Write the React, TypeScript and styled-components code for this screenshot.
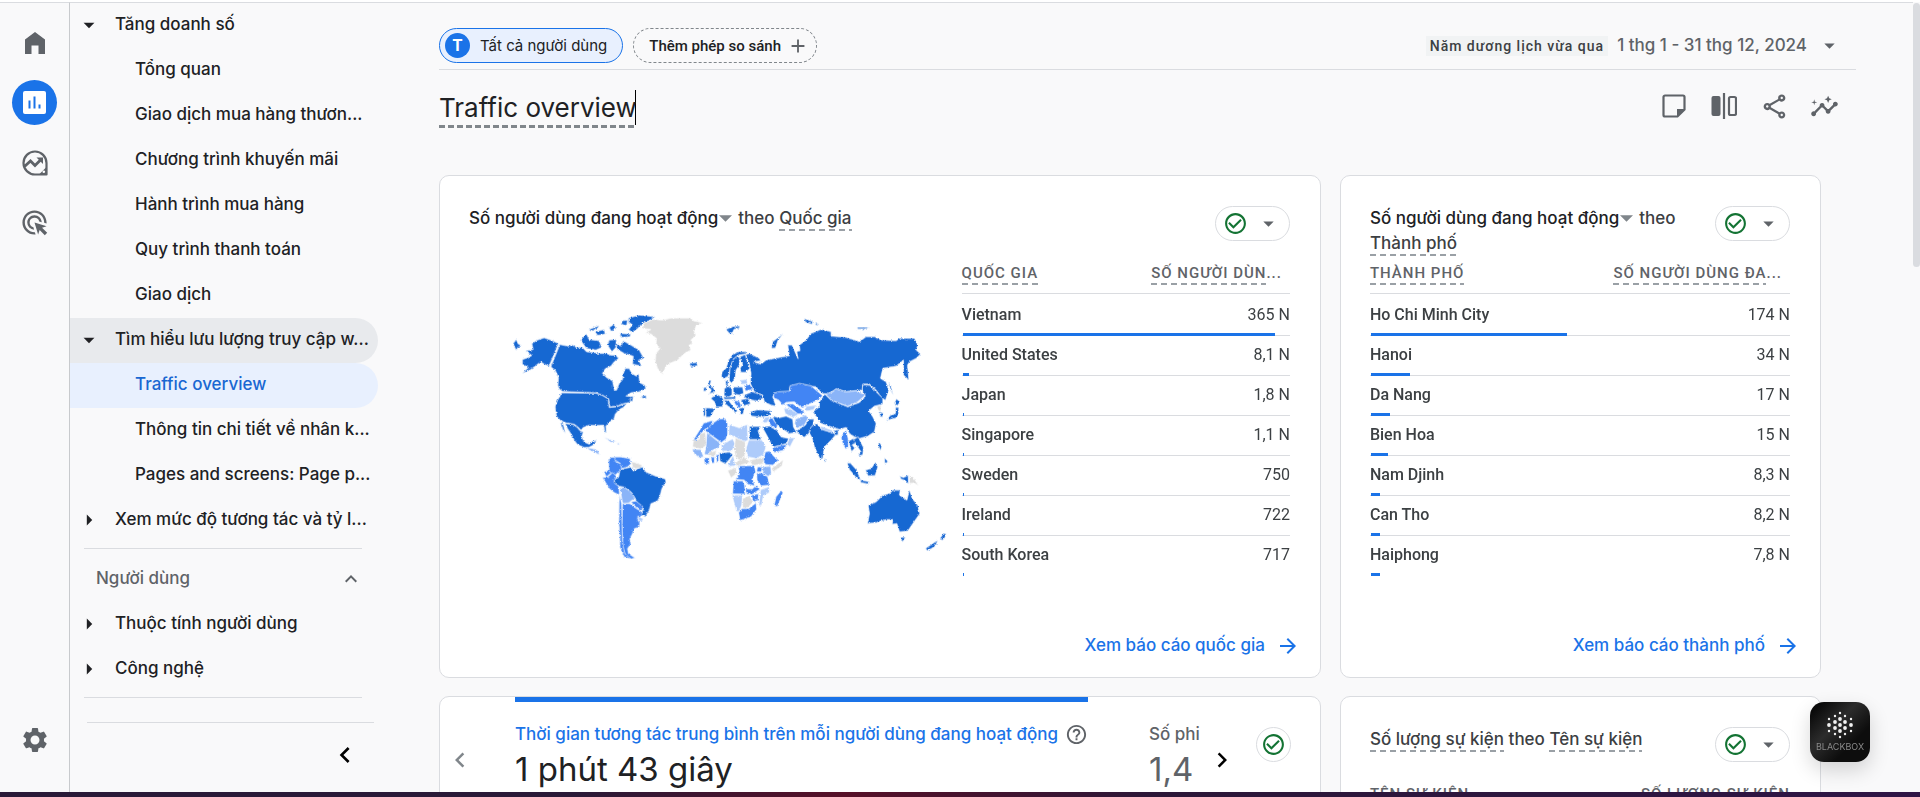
import React from "react";
import styled, { createGlobalStyle, css } from "styled-components";
import {
  MdAdd,
  MdAdsClick,
  MdArrowDropDown,
  MdArrowForward,
  MdArrowRight,
  MdCheckCircleOutline,
  MdChevronLeft,
  MdChevronRight,
  MdExpandLess,
  MdHelpOutline,
  MdInsights,
  MdOutlineShare,
  MdSettings,
} from "react-icons/md";

const color = {
  page: "#f9f9fa",
  line: "#dadce0",
  ink: "#202124",
  text: "#3c4043",
  muted: "#5f6368",
  blue: "#1a73e8",
  green: "#137333",
};

const Global = createGlobalStyle`
  *, *::before, *::after { box-sizing: border-box; }
  body { margin: 0; background: ${color.page}; color: ${color.ink}; font: 500 17px/25px Inter, "Noto Sans", sans-serif; }
  button, input { font: inherit; color: inherit; }
  button { border: 0; background: none; padding: 0; cursor: pointer; }
  a { text-decoration: none; color: inherit; }
  ul { list-style: none; margin: 0; padding: 0; }
  h1, h2, p { margin: 0; font: inherit; }
  svg { display: block; flex: none; }
`;

const dashes = css`
  background: repeating-linear-gradient(90deg, #9aa0a6 0 6px, transparent 6px 10px) left bottom / 100% 2px no-repeat;
`;

/* ---------- frame ---------- */

const Shell = styled.div`
  height: 100vh;
  display: grid;
  grid-template-columns: 70px 308px minmax(0, 1fr) 7px;
  grid-template-rows: minmax(0, 1fr) 5px;
  border-top: 2px solid #fff;
  overflow: hidden;
`;

const Rail = styled.nav`
  display: flex;
  flex-direction: column;
  align-items: center;
  gap: 15px;
  padding: 17px 0 30px;
  border-right: 1px solid #c8cacd;
  border-top: 1px solid ${color.line};
  color: ${color.muted};
`;

const RailButton = styled.button<{ $active?: boolean; $last?: boolean }>`
  width: 45px;
  height: 45px;
  border-radius: 50%;
  display: grid;
  place-items: center;
  background: ${(p) => (p.$active ? color.blue : "transparent")};
  color: ${(p) => (p.$active ? "#fff" : color.muted)};
  margin-top: ${(p) => (p.$last ? "auto" : "0")};
`;

const Side = styled.nav`
  border-top: 1px solid ${color.line};
  display: flex;
  flex-direction: column;
  overflow: hidden;
`;

const NavLink = styled.a<{ $child?: boolean; $tone?: "open" | "selected" }>`
  display: flex;
  align-items: center;
  height: 45px;
  padding: 0 6px 2px ${(p) => (p.$child ? "65px" : "0")};
  white-space: nowrap;
  border-radius: 0 23px 23px 0;
  background: ${(p) => (p.$tone === "open" ? "#e8eaed" : p.$tone === "selected" ? "#e8f0fe" : "none")};
  color: ${(p) => (p.$tone === "selected" ? "#1967d2" : color.ink)};
`;

const Caret = styled.span`
  width: 45px;
  padding-left: 6px;
`;

const Rule = styled.hr<{ $wide?: boolean }>`
  width: ${(p) => (p.$wide ? "287px" : "278px")};
  margin: ${(p) => (p.$wide ? "24px 0 0 17px" : "5px 0 0 14px")};
  border: 0;
  border-top: 1px solid ${color.line};
`;

const Section = styled.button`
  display: flex;
  align-items: center;
  justify-content: space-between;
  height: 45px;
  margin-top: 8px;
  padding: 0 15px 2px 26px;
  color: ${color.muted};
`;

const Collapse = styled.button`
  align-self: flex-end;
  margin: 16px 17px 0 0;
  color: #000;
`;

const Main = styled.main`
  border-top: 1px solid ${color.line};
  padding: 25px 57px 0 61px;
  overflow: hidden;
`;

const Scrollbar = styled.div`
  height: 264px;
  margin-top: 1px;
  border-radius: 4px;
  background: ${color.line};
`;

const Dock = styled.div`
  grid-column: 1 / -1;
  background: linear-gradient(90deg, #2a1a38 0 30%, #571028 44%, #2c1738 60%, #2f1546 100%);
`;

/* ---------- header ---------- */

const TopBar = styled.header`
  display: flex;
  align-items: center;
  gap: 10px;
  padding-bottom: 6px;
  border-bottom: 1px solid ${color.line};
`;

const Chip = styled.button<{ $solid?: boolean }>`
  height: 35px;
  min-width: 184px;
  display: flex;
  align-items: center;
  gap: ${(p) => (p.$solid ? "8px" : "6px")};
  padding: 0 ${(p) => (p.$solid ? "15px 0 5px" : "7px 0 15px")};
  border-radius: 18px;
  border: 1px ${(p) => (p.$solid ? `solid ${color.blue}` : "dashed #80868b")};
  background: ${(p) => (p.$solid ? "#e8f0fe" : "transparent")};
  font: ${(p) => (p.$solid ? "400 15px/20px Inter, sans-serif" : "500 15px/20px Roboto, sans-serif")};
  white-space: nowrap;
`;

const Avatar = styled.span`
  width: 25px;
  height: 25px;
  margin-right: 2px;
  border-radius: 50%;
  background: ${color.blue};
  color: #fff;
  font: 700 16px/25px Roboto, sans-serif;
`;

const DateButton = styled.button`
  display: flex;
  align-items: center;
  margin-left: auto;
  padding-right: 14px;
  color: ${color.muted};
  white-space: nowrap;
  svg { margin-left: 10px; }
`;

const Preset = styled.span`
  padding: 0 4px;
  margin-right: 9px;
  background: #f1f3f4;
  color: ${color.text};
  font: 500 14px/20px Roboto, sans-serif;
  letter-spacing: 1px;
`;

const TitleRow = styled.div`
  display: flex;
  justify-content: space-between;
  align-items: flex-start;
  padding: 20px 7px 47px 0;
`;

const TitleInput = styled.input`
  width: 197px;
  height: 38px;
  padding: 0 0 3px;
  border: 0;
  outline: 0;
  font: 400 26px/32px Inter, sans-serif;
  background:
    linear-gradient(#000, #000) right top / 1px 35px no-repeat,
    repeating-linear-gradient(90deg, #80868b 0 6px, transparent 6px 9px) left bottom / 100% 3px no-repeat;
`;

const Tools = styled.div`
  display: flex;
  color: ${color.muted};
`;

const Tool = styled.button`
  width: 50px;
  height: 32px;
  display: grid;
  place-items: center;
`;

/* ---------- cards ---------- */

const Cards = styled.div`
  display: grid;
  grid-template-columns: 11fr 6fr;
  gap: 18px 19px;
  margin-right: 35px;
`;

const Card = styled.section<{ $flush?: boolean }>`
  display: flex;
  flex-direction: column;
  min-width: 0;
  min-height: 503px;
  padding: ${(p) => (p.$flush ? "0 29px 0 0" : "30px 30px 19px 29px")};
  background: #fff;
  border: 1px solid ${color.line};
  border-radius: 10px;
`;

const CardHead = styled.header`
  display: flex;
  align-items: flex-start;
  justify-content: space-between;
  min-height: 50px;
`;

const CardTitle = styled.h2`
  max-width: 400px;
`;

const Metric = styled.button`
  display: inline-flex;
  align-items: center;
  gap: 1px;
  margin-right: 6px;
`;

const Dashed = styled.span`
  display: inline-block;
  color: ${color.text};
  ${dashes}
`;

const Muted = styled.span`
  color: ${color.text};
`;

const Status = styled.button<{ $round?: boolean }>`
  flex: none;
  width: ${(p) => (p.$round ? "35px" : "75px")};
  height: 35px;
  display: flex;
  align-items: center;
  justify-content: center;
  gap: 8px;
  border: 1px solid ${color.line};
  border-radius: 18px;
  background: #fff;
  color: ${color.muted};
  svg:first-child { color: ${color.green}; }
`;

const Split = styled.div`
  display: grid;
  grid-template-columns: 3fr 2fr;
  align-items: start;
`;

const MapArt = styled.svg`
  width: 100%;
  margin-top: 34px;
`;

const Table = styled.table`
  width: 100%;
  border-spacing: 0;
  font: 400 16px/20px Roboto, sans-serif;
  color: ${color.text};
`;

const HeadCell = styled.th<{ $side?: "end" | "cut" }>`
  height: 38px;
  padding: 7px ${(p) => (p.$side === "cut" ? "8px" : "0")} 0 0;
  vertical-align: top;
  text-align: ${(p) => (p.$side ? "right" : "left")};
  font: 500 15px/20px Roboto, sans-serif;
  letter-spacing: 1px;
  color: ${color.muted};
  border-bottom: 1px solid ${color.line};
  white-space: nowrap;
`;

const HeadText = styled.span`
  display: inline-block;
  padding-bottom: 2px;
  ${dashes}
`;

const Row = styled.tr`
  position: relative;
  td { border-bottom: 1px solid ${color.line}; height: 40px; padding: 9px 0 0; vertical-align: top; }
  &:first-child td { height: 42px; padding-top: 11px; }
  &:last-child td { border-bottom-color: transparent; }
`;

const Name = styled.td`
  font-weight: 500;
`;

const Value = styled.td`
  text-align: right;
`;

const Bar = styled.span`
  position: absolute;
  left: 1px;
  bottom: 0;
  height: 3px;
  min-width: 1px;
  background: ${color.blue};
`;

const ReportLink = styled.a`
  display: flex;
  align-items: center;
  align-self: flex-end;
  gap: 11px;
  margin: auto -10px 0 0;
  color: ${color.blue};
`;

const Carousel = styled.div`
  display: flex;
  align-items: flex-start;
`;

const Step = styled.button<{ $on?: boolean }>`
  width: 40px;
  margin-top: 48px;
  display: grid;
  place-items: center;
  color: ${(p) => (p.$on ? "#000" : "#80868b")};
`;

const Tabs = styled.div`
  flex: 1;
  min-width: 0;
  display: flex;
  gap: 61px;
  padding-left: 35px;
  overflow: hidden;
`;

const Tab = styled.button<{ $active?: boolean }>`
  flex: none;
  padding-top: 20px;
  text-align: left;
  white-space: nowrap;
  border-top: 5px solid ${(p) => (p.$active ? color.blue : "transparent")};
  color: ${(p) => (p.$active ? color.blue : color.muted)};
`;

const TabLabel = styled.span`
  display: flex;
  align-items: center;
  gap: 7px;
  svg { color: ${color.muted}; }
`;

const TabValue = styled.span<{ $active?: boolean }>`
  display: block;
  margin-top: 2px;
  font: 400 33px/40px Inter, sans-serif;
  color: ${(p) => (p.$active ? color.ink : color.muted)};
`;

const StatusSlot = styled.div`
  margin: 30px 0 0 14px;
`;

const Assistant = styled.button`
  position: fixed;
  right: 50px;
  bottom: 35px;
  width: 60px;
  height: 60px;
  display: flex;
  flex-direction: column;
  align-items: center;
  gap: 1px;
  padding-top: 8px;
  border-radius: 14px;
  background: linear-gradient(135deg, #0a0a0a 10%, #2c2c2c 40%, #0d0d0d 70%);
  box-shadow: 0 8px 20px rgba(0, 0, 0, 0.16);
  color: #8a8a8a;
  font: 400 9px/12px Inter, sans-serif;
`;

/* ---------- icons ---------- */

const HomeIcon = () => (
  <svg width="20" height="22" viewBox="0 0 20 22" fill="currentColor">
    <path d="M0 7.500 10 0l10 7.500V22h-6.500v-8.500h-7V22H0z" />
  </svg>
);

const ReportsIcon = () => (
  <svg width="23" height="23" viewBox="0 0 23 23">
    <rect width="23" height="23" rx="2" fill="#fff" />
    <path d="M6.500 17.500V9.500M11.500 17.500V5.500M16.500 17.500v-4" stroke={color.blue} strokeWidth="2" />
  </svg>
);

const ExploreIcon = () => (
  <svg width="26" height="26" viewBox="0 0 26 26" fill="none" stroke="currentColor" strokeWidth="2.200">
    <path d="M13 24.500a11.500 11.500 0 1 1 11.500-11.500v11.500z" strokeLinejoin="round" />
    <path d="M2.500 16.500l6-5.500 4.500 4.500 6.500-6.500" strokeWidth="2.800" />
    <path d="M14.500 7.500H21V14z" fill="currentColor" stroke="none" />
    <path d="M16.500 25 25 16.500V25z" fill="currentColor" stroke="none" />
    <circle cx="21.800" cy="21.800" r="1.300" fill="#fff" stroke="none" />
  </svg>
);

const NoteIcon = () => (
  <svg width="24" height="24" viewBox="0 0 24 24" fill="none" stroke="currentColor" strokeWidth="2.200">
    <path d="M3 1.500h18a1.500 1.500 0 0 1 1.500 1.500v12.500l-7 7H3A1.500 1.500 0 0 1 1.500 21V3A1.500 1.500 0 0 1 3 1.500z" />
    <path d="M15 22.500V15h7.500z" fill="currentColor" stroke="none" />
  </svg>
);

const CompareIcon = () => (
  <svg width="26" height="26" viewBox="0 0 26 26" fill="none" stroke="currentColor">
    <rect x="0.500" y="3" width="9" height="20" rx="2" fill="currentColor" stroke="none" />
    <path d="M13 0v26" strokeWidth="2.200" />
    <rect x="18" y="4" width="7" height="18" rx="1.500" strokeWidth="2.200" />
  </svg>
);

const CheckIcon = () => <MdCheckCircleOutline size={25} />;

const dots: [number, number, number][] = [
  [15, 2, 1], [10, 5, 1], [20, 5, 1], [15, 8, 2], [4, 8, 1], [26, 8, 1], [10, 11, 2], [20, 11, 2], [4, 14, 2], [26, 14, 2],
  [15, 14, 2], [10, 17, 2], [20, 17, 2], [4, 20, 1], [26, 20, 1], [15, 20, 2], [10, 23, 1], [20, 23, 1], [15, 26, 1],
];

const DotsIcon = () => (
  <svg width="30" height="30" viewBox="0 0 30 28" fill="#f1f1f1">
    {dots.map(([x, y, r], i) => (
      <circle key={i} cx={x} cy={y} r={r === 2 ? 1.9 : 1.2} />
    ))}
  </svg>
);

/* ---------- world map ---------- */

const D = "#1967d2";
const M = "#4285f4";
const L = "#8ab4f8";
const P = "#aecbfa";
const G = "#dcdcdc";

type Land = [string, string];

const americas: Land[] = [
  [D, "182,163 205,168 220,165 232,172 250,172 262,185 285,187 300,190 322,190 335,195 350,195 358,205 345,215 335,228 318,236 310,250 322,262 340,272 346,300 352,300 360,280 370,268 372,250 378,235 390,235 398,250 412,258 418,250 422,278 437,285 440,296 420,305 395,308 380,318 395,318 400,330 388,338 375,340 350,348 332,350 328,325 310,315 290,308 190,304 180,296 176,285 178,262 168,240 155,230"],
  [D, "188,308 290,309 310,316 327,326 330,352 352,350 385,338 372,352 360,358 348,372 345,385 330,397 320,408 322,428 317,425 313,405 290,406 270,405 252,412 245,420 238,412 225,402 200,398 185,392 172,378 168,350 175,330"],
  [D, "178,160 150,228 135,222 125,215 108,228 92,240 70,250 88,232 70,222 70,208 88,202 98,196 80,183 102,178 98,160 115,150 135,143 155,150"],
  [D, "42,160 52,148 56,160 68,168 56,172 52,182 46,170"],
  [D, "198,400 222,403 235,412 243,422 252,425 248,440 255,455 270,462 280,453 292,450 283,464 268,472 255,472 235,463 225,450 218,435 205,415"],
  [D, "184,398 191,398 199,429 192,420"],
  [L, "262,472 285,476 298,482 300,494 290,488 272,480"],
  [D, "388,84 420,75 468,80 450,92 430,100 415,115 400,128 388,118 400,105 388,95"],
  [D, "368,92 385,90 382,108 366,102"],
  [D, "350,162 366,168 372,152 395,165 420,180 434,205 418,210 428,228 400,222 402,198 375,190 355,178"],
  [D, "244,150 262,132 270,148 300,152 308,172 290,180 262,175"],
  [D, "270,118 300,106 296,114 275,124"],
  [D, "330,150 352,148 350,172 338,185 325,165"],
  [D, "288,125 315,118 318,132 295,136"],
  [D, "362,130 395,132 392,140 365,142"],
  [D, "330,112 345,102 350,115 336,124"],
  [D, "426,318 440,316 442,325 430,324"],
  [D, "392,320 402,318 400,334 394,334"],
  [L, "315,441 335,449 352,454 335,456"],
  [L, "354,458 364,460 356,464"],
  [G, "432,100 460,88 490,90 515,84 575,84 582,92 610,98 590,108 585,125 590,135 575,150 580,160 570,165 575,180 555,190 535,210 510,220 500,230 490,252 475,235 468,215 470,190 482,175 470,160 472,145 455,132 438,128 455,118 430,115"],
  [M, "335,502 348,500 350,515 365,520 368,535 355,548 345,557 330,545 328,510"],
  [M, "345,500 365,500 392,505 396,520 385,530 368,535 362,518 350,512"],
  [G, "396,514 412,518 428,524 426,534 402,536"],
  [M, "314,545 328,540 336,548 322,560"],
  [M, "310,562 326,560 340,547 352,558 345,575 358,587 362,615 345,607 330,595"],
  [D, "362,540 375,535 398,530 402,542 430,530 440,545 470,558 498,566 500,575 488,595 482,618 475,632 455,640 450,660 438,680 425,672 432,657 415,640 408,625 395,605 372,590 360,588 347,580 345,567 358,562"],
  [L, "362,592 378,592 398,608 408,625 395,632 390,638 370,640"],
  [M, "395,635 410,632 430,648 428,660 412,652"],
  [M, "370,640 392,640 410,654 425,662 430,675 415,685 422,700 420,710 405,715 400,730 392,745 395,760 385,775 388,790 408,803 395,806 380,800 370,770 370,740 368,700"],
  [M, "360,610 367,640 368,700 370,760 377,790 395,806 375,800 362,770 362,740 359,700"],
  [P, "416,677 432,685 428,694 416,690"],
];

/* Europe, Africa and western Asia, drawn from the north-west corner of Iceland */
const centre: Land[] = [
  [D, "0,55 22,52 25,62 5,65"],
  [D, "96,95 98,80 110,70 118,45 130,28 150,20 172,20 174,26 148,30 135,40 125,60 120,85 115,95 103,100"],
  [D, "120,98 122,70 130,45 142,34 152,38 150,60 140,75 138,95 128,114 120,108"],
  [D, "150,36 168,28 172,45 182,70 168,82 155,82 152,70 160,58"],
  [D, "58,106 66,106 62,120 72,128 78,140 60,146 66,135 58,125"],
  [D, "44,127 52,127 50,138 42,138"],
  [D, "105,130 120,123 128,130 128,150 118,156 104,152"],
  [D, "131,126 160,126 163,145 150,150 132,146"],
  [D, "108,108 116,106 116,120 110,122"],
  [D, "64,160 82,148 98,155 103,165 100,185 80,186 76,170"],
  [D, "50,188 77,190 70,205 62,216 50,216"],
  [D, "44,188 49,188 48,214 42,212"],
  [D, "105,166 118,166 130,182 145,198 138,202 125,190 108,176"],
  [D, "103,156 122,156 140,154 138,162 104,163"],
  [D, "162,150 190,140 212,148 222,158 205,168 188,165 170,160"],
  [M, "165,122 180,117 192,133 168,138"],
  [P, "152,106 172,102 175,116 158,118"],
  [D, "154,164 176,160 184,176 164,182"],
  [M, "132,166 150,168 156,182 150,190 138,178"],
  [D, "150,190 165,186 162,206 154,208"],
  [D, "182,200 205,194 245,197 244,210 215,216 186,213"],
  [P, "222,218 242,214 234,232 220,234"],
  [M, "236,226 247,216 264,240 262,250 245,242"],
  [D, "250,212 268,218 290,213 310,222 312,245 322,262 300,265 285,255 268,245 255,228"],
  [D, "218,245 240,243 262,255 275,275 298,280 292,295 255,305 245,295 232,270"],
  [M, "248,308 278,300 292,298 284,315 255,322"],
  [P, "300,278 316,278 302,305 292,298"],
  [M, "253,145 268,140 300,138 302,122 330,115 365,122 400,152 385,165 352,180 335,187 315,170 290,172 280,180 268,165 253,158"],
  [M, "288,178 310,176 335,192 348,204 325,207 305,190"],
  [P, "283,190 300,190 328,208 310,217 288,206"],
  [P, "345,184 382,180 372,194 350,198"],
  [L, "318,222 350,210 356,220 345,240 322,250 316,235"],
  [D, "322,256 348,240 358,222 374,222 370,245 358,265 345,276 325,264"],
  [D, "360,264 365,245 382,235 395,250 430,262 438,270 425,285 405,305 400,340 392,342 375,305 368,278"],
  [P, "394,243 430,256 430,264 394,252"],
  [D, "405,338 411,348 406,350"],
  [M, "43,234 70,226 68,240 45,254 18,287 12,285 36,247"],
  [M, "68,236 88,222 108,220 115,236 115,265 110,282 96,292 48,257"],
  [P, "120,238 150,248 174,238 176,285 165,290 135,275 118,268"],
  [D, "180,244 215,244 206,258 216,283 180,283"],
  [G, "12,287 30,282 30,268 48,260 52,300 35,312 10,305"],
  [L, "53,262 94,295 88,308 70,315 58,330 45,327 50,305"],
  [P, "95,300 130,281 137,295 128,318 98,318"],
  [G, "138,278 168,290 168,330 150,345 138,335 135,310"],
  [P, "178,285 218,285 230,305 222,330 200,340 175,335 170,310"],
  [D, "90,324 120,321 131,328 118,345 108,356 92,348"],
  [M, "44,338 60,338 60,356 46,356"],
  [M, "65,336 76,336 75,354 67,354"],
  [M, "80,332 88,326 88,350 82,350"],
  [G, "58,322 82,316 78,332 58,334"],
  [L, "8,312 35,313 43,335 30,338 15,325"],
  [P, "116,356 132,330 138,362 118,364"],
  [G, "138,352 165,336 184,352 160,358 142,364"],
  [G, "180,345 200,341 225,335 222,356 190,362"],
  [M, "222,345 228,320 240,318 255,335 268,345 250,360 228,358"],
  [G, "246,370 270,352 282,344 278,362 252,380"],
  [L, "220,365 244,363 246,385 236,394 220,382"],
  [M, "204,366 218,364 216,380 202,380"],
  [G, "115,376 140,366 142,385 125,398"],
  [M, "147,362 195,361 199,380 190,400 196,422 175,417 165,405 138,402 150,388"],
  [M, "202,384 218,384 235,395 240,420 215,422 203,405"],
  [M, "132,408 160,407 166,420 168,447 130,446"],
  [M, "168,430 188,432 202,420 212,432 190,447 172,447"],
  [P, "213,434 240,424 240,442 222,452 217,480 208,482 212,450"],
  [P, "128,450 160,450 157,480 150,499 141,498"],
  [G, "160,460 180,451 192,470 176,487 160,489"],
  [M, "186,450 208,446 206,466 192,470"],
  [M, "148,502 158,490 178,490 200,473 202,492 185,515 152,526"],
  [M, "275,436 281,442 264,484 254,482 260,455"],
];

/* Russia, eastern Asia and Oceania */
const east: Land[] = [
  [D, "138,195 150,190 180,205 184,212 162,215 185,222 200,210 225,205 250,200 270,197 265,165 278,165 296,206 292,185 302,182 300,165 320,150 335,130 365,118 395,125 395,138 440,142 480,155 500,140 525,140 545,150 590,152 600,145 645,145 655,165 650,180 663,192 650,205 630,215 624,225 628,270 612,255 612,210 590,228 550,235 543,265 560,275 568,300 558,330 548,325 530,300 510,282 490,282 488,300 465,302 440,305 410,297 385,312 368,310 350,290 330,288 302,283 272,290 270,306 228,308 220,320 230,348 215,345 195,335 190,315 165,305 153,280 155,250 150,220"],
  [D, "216,175 220,155 252,131 236,150 228,174"],
  [D, "80,118 100,110 122,108 120,114 104,118 98,132 90,130"],
  [D, "314,86 340,95 338,103 318,96"],
  [D, "346,98 358,103 350,106"],
  [D, "472,112 512,112 495,117 476,117"],
  [D, "340,365 360,350 360,335 376,312 395,330 420,340 445,350 480,337 497,320 488,300 490,284 510,285 530,305 550,325 550,342 525,348 508,362 520,380 530,400 525,425 505,438 480,445 465,440 450,430 440,412 420,418 400,412 365,400 355,385"],
  [L, "378,312 400,305 410,296 440,305 470,302 498,315 475,335 445,349 418,339 395,330"],
  [G, "532,348 545,346 544,364 536,360"],
  [D, "541,365 551,369 549,381 541,379"],
  [D, "585,338 591,326 602,336 590,350"],
  [D, "588,352 598,352 597,374 589,384 572,388 560,393 572,376 588,370"],
  [D, "566,274 575,290 581,314 574,302"],
  [M, "424,440 440,418 446,445 447,472 438,476 430,460"],
  [D, "404,422 416,418 416,434 406,436"],
  [D, "448,452 464,444 470,458 458,464 466,474 456,484 452,470"],
  [D, "462,448 476,440 492,472 490,494 476,498 484,484 472,466"],
  [D, "443,519 453,519 472,540 484,570 470,562 450,538"],
  [D, "482,569 510,575 508,582 484,577"],
  [D, "498,540 515,535 528,516 535,530 527,556 506,557"],
  [D, "539,454 547,468 543,482 537,466"],
  [D, "555,503 566,514 556,520"],
  [D, "600,558 612,562 626,555 627,582 618,572 604,566"],
  [G, "630,555 642,562 658,588 644,578 630,580"],
  [D, "506,645 530,635 550,615 570,610 580,600 602,600 600,615 622,630 630,598 638,625 655,645 661,670 640,700 625,722 600,725 592,700 578,702 580,688 560,688 530,697 504,700 510,670"],
  [D, "603,741 618,741 609,755"],
  [D, "721,744 726,738 731,729 740,731 736,742 728,750"],
  [D, "678,774 692,765 708,754 715,752 706,768 694,776 683,781"],
];

const regions: { x: number; y: number; lands: Land[] }[] = [
  { x: 0, y: 0, lands: americas },
  { x: 600, y: 0, lands: east },
  { x: 570, y: 165, lands: centre },
];

const WorldMap = () => (
  <MapArt viewBox="-90 0 1476 870" role="img" aria-label="Quốc gia">
    <filter id="coast" x="0" y="0" width="100%" height="100%">
      <feTurbulence type="fractalNoise" baseFrequency="0.2" numOctaves="2" seed="4" />
      <feDisplacementMap in="SourceGraphic" scale="8" xChannelSelector="R" yChannelSelector="G" />
    </filter>
    <g filter="url(#coast)" stroke="#fff" strokeWidth="2" strokeLinejoin="round">
      {regions.map((r) => (
        <g key={`${r.x}-${r.y}`} transform={`translate(${r.x} ${r.y})`}>
          {r.lands.map(([fill, points]) => (
            <polygon key={points} points={points} fill={fill} />
          ))}
        </g>
      ))}
    </g>
  </MapArt>
);

/* ---------- data ---------- */

type NavItem = { label: string; child?: boolean; open?: boolean; selected?: boolean; tinted?: boolean };

const navItems: NavItem[] = [
  { label: "Tăng doanh số", open: true },
  { label: "Tổng quan", child: true },
  { label: "Giao dịch mua hàng thươn...", child: true },
  { label: "Chương trình khuyến mãi", child: true },
  { label: "Hành trình mua hàng", child: true },
  { label: "Quy trình thanh toán", child: true },
  { label: "Giao dịch", child: true },
  { label: "Tìm hiểu lưu lượng truy cập w...", open: true, tinted: true },
  { label: "Traffic overview", child: true, selected: true },
  { label: "Thông tin chi tiết về nhân k...", child: true },
  { label: "Pages and screens: Page p...", child: true },
  { label: "Xem mức độ tương tác và tỷ l..." },
];

const userItems: NavItem[] = [{ label: "Thuộc tính người dùng" }, { label: "Công nghệ" }];

type Datum = [name: string, value: string, share: number];

const countries: Datum[] = [
  ["Vietnam", "365 N", 95],
  ["United States", "8,1 N", 2.1],
  ["Japan", "1,8 N", 0.5],
  ["Singapore", "1,1 N", 0.3],
  ["Sweden", "750", 0.2],
  ["Ireland", "722", 0.2],
  ["South Korea", "717", 0.2],
];

const cities: Datum[] = [
  ["Ho Chi Minh City", "174 N", 46.7],
  ["Hanoi", "34 N", 9.2],
  ["Da Nang", "17 N", 4.6],
  ["Bien Hoa", "15 N", 4.1],
  ["Nam Djinh", "8,3 N", 2.2],
  ["Can Tho", "8,2 N", 2.2],
  ["Haiphong", "7,8 N", 2.1],
];

/* ---------- parts ---------- */

const NavList = ({ items }: { items: NavItem[] }) => (
  <ul>
    {items.map((item) => (
      <li key={item.label}>
        <NavLink
          href="#"
          $child={item.child}
          $tone={item.selected ? "selected" : item.tinted ? "open" : undefined}
          aria-current={item.selected ? "page" : undefined}
        >
          {!item.child && <Caret>{item.open ? <MdArrowDropDown size={26} /> : <MdArrowRight size={26} />}</Caret>}
          {item.label}
        </NavLink>
      </li>
    ))}
  </ul>
);

const StatusMenu = () => (
  <Status aria-label="Chất lượng dữ liệu">
    <CheckIcon />
    <MdArrowDropDown size={25} />
  </Status>
);

const DataTable = ({ first, second, cut, rows }: { first: string; second: string; cut?: boolean; rows: Datum[] }) => (
  <Table>
    <thead>
      <tr>
        <HeadCell scope="col">
          <HeadText>{first}</HeadText>
        </HeadCell>
        <HeadCell scope="col" $side={cut ? "cut" : "end"}>
          <HeadText>{second}</HeadText>
          {cut && "..."}
        </HeadCell>
      </tr>
    </thead>
    <tbody>
      {rows.map(([name, value, share]) => (
        <Row key={name}>
          <Name>
            {name}
            <Bar style={{ width: `${share}%` }} />
          </Name>
          <Value>{value}</Value>
        </Row>
      ))}
    </tbody>
  </Table>
);

const MetricTitle = ({ by }: { by: string }) => (
  <CardTitle>
    <Metric>
      Số người dùng đang hoạt động
      <svg width="13" height="7" viewBox="0 0 12 6" fill="#80868b">
        <path d="M0 0h12L6 6z" />
      </svg>
    </Metric>
    <Muted>theo </Muted>
    <Dashed>{by}</Dashed>
  </CardTitle>
);

export default function App() {
  return (
    <>
      <Global />
      <Shell>
        <Rail aria-label="Chính">
          <RailButton aria-label="Trang chủ"><HomeIcon /></RailButton>
          <RailButton $active aria-label="Báo cáo"><ReportsIcon /></RailButton>
          <RailButton aria-label="Khám phá"><ExploreIcon /></RailButton>
          <RailButton aria-label="Quảng cáo"><MdAdsClick size={29} /></RailButton>
          <RailButton $last aria-label="Quản trị"><MdSettings size={30} /></RailButton>
        </Rail>

        <Side aria-label="Báo cáo">
          <NavList items={navItems} />
          <Rule />
          <Section aria-expanded="true">
            Người dùng
            <MdExpandLess size={24} />
          </Section>
          <NavList items={userItems} />
          <Rule />
          <Rule $wide />
          <Collapse aria-label="Thu gọn"><MdChevronLeft size={32} /></Collapse>
        </Side>

        <Main>
          <TopBar>
            <Chip $solid>
              <Avatar>T</Avatar>
              Tất cả người dùng
            </Chip>
            <Chip>
              Thêm phép so sánh
              <MdAdd size={22} color={color.muted} />
            </Chip>
            <DateButton>
              <Preset>Năm dương lịch vừa qua</Preset>
              1 thg 1 - 31 thg 12, 2024
              <MdArrowDropDown size={25} />
            </DateButton>
          </TopBar>

          <TitleRow>
            <h1>
              <TitleInput aria-label="Tên báo cáo" defaultValue="Traffic overview" />
            </h1>
            <Tools>
              <Tool aria-label="Ghi chú"><NoteIcon /></Tool>
              <Tool aria-label="So sánh"><CompareIcon /></Tool>
              <Tool aria-label="Chia sẻ"><MdOutlineShare size={29} /></Tool>
              <Tool aria-label="Thông tin chi tiết"><MdInsights size={29} /></Tool>
            </Tools>
          </TitleRow>

          <Cards>
            <Card>
              <CardHead>
                <MetricTitle by="Quốc gia" />
                <StatusMenu />
              </CardHead>
              <Split>
                <WorldMap />
                <DataTable first="QUỐC GIA" second="SỐ NGƯỜI DÙN" cut rows={countries} />
              </Split>
              <ReportLink href="#">
                Xem báo cáo quốc gia
                <MdArrowForward size={24} />
              </ReportLink>
            </Card>

            <Card>
              <CardHead>
                <MetricTitle by="Thành phố" />
                <StatusMenu />
              </CardHead>
              <DataTable first="THÀNH PHỐ" second="SỐ NGƯỜI DÙNG ĐA" cut rows={cities} />
              <ReportLink href="#">
                Xem báo cáo thành phố
                <MdArrowForward size={24} />
              </ReportLink>
            </Card>

            <Card $flush>
              <Carousel>
                <Step aria-label="Trước"><MdChevronLeft size={30} /></Step>
                <Tabs role="tablist">
                  <Tab role="tab" aria-selected="true" $active>
                    <TabLabel>
                      Thời gian tương tác trung bình trên mỗi người dùng đang hoạt động
                      <MdHelpOutline size={23} />
                    </TabLabel>
                    <TabValue $active>1 phút 43 giây</TabValue>
                  </Tab>
                  <Tab role="tab" aria-selected="false">
                    <TabLabel>Số phi</TabLabel>
                    <TabValue>1,4</TabValue>
                  </Tab>
                </Tabs>
                <Step $on aria-label="Tiếp"><MdChevronRight size={30} /></Step>
                <StatusSlot>
                  <Status $round aria-label="Chất lượng dữ liệu"><CheckIcon /></Status>
                </StatusSlot>
              </Carousel>
            </Card>

            <Card>
              <CardHead>
                <CardTitle>
                  <Dashed>Số lượng sự kiện</Dashed> <Muted>theo</Muted> <Dashed>Tên sự kiện</Dashed>
                </CardTitle>
                <StatusMenu />
              </CardHead>
              <DataTable first="TÊN SỰ KIỆN" second="SỐ LƯỢNG SỰ KIỆN" rows={[]} />
            </Card>
          </Cards>
        </Main>

        <Scrollbar />
        <Dock />
      </Shell>
      <Assistant>
        <DotsIcon />
        BLACKBOX
      </Assistant>
    </>
  );
}
